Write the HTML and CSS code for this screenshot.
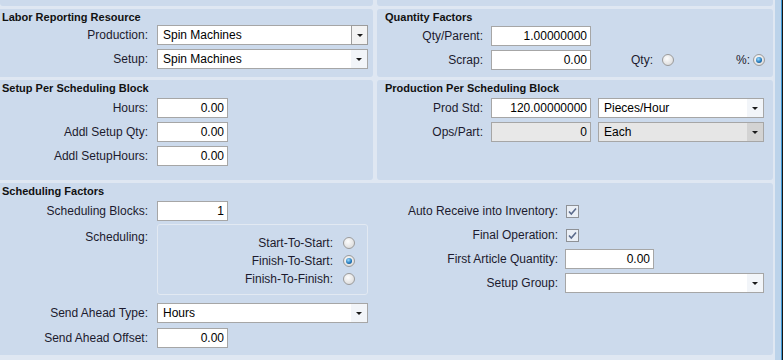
FILE: index.html
```html
<!DOCTYPE html>
<html>
<head>
    <meta charset="UTF-8">
    <meta name="viewport" content="width=device-width, initial-scale=1.0">
    <link rel="stylesheet" href="styles.css">
</head>
<body>
    <div class="screen">
        <div class="board">
            <div class="panel stub"></div>
            <div class="panel stub"></div>

            <section class="panel left">
                <h2>Labor Reporting Resource</h2>
                <div class="fields">
                    <div class="row">
                        <label>Production:</label>
                        <div class="select w211 hot"><span>Spin Machines</span><b class="btn"><i class="arrow"></i></b></div>
                    </div>
                    <div class="row">
                        <label>Setup:</label>
                        <div class="select w211"><span>Spin Machines</span><b class="btn"><i class="arrow"></i></b></div>
                    </div>
                </div>
            </section>

            <section class="panel right">
                <h2>Quantity Factors</h2>
                <div class="fields q">
                    <div class="row">
                        <label>Qty/Parent:</label>
                        <div class="line"><input class="num w100" value="1.00000000" readonly></div>
                    </div>
                    <div class="row">
                        <label>Scrap:</label>
                        <div class="line">
                            <input class="num w100" value="0.00" readonly>
                            <span class="opt qty">Qty:</span><span class="radio"></span>
                            <span class="opt pct">%:</span><span class="radio on"></span>
                        </div>
                    </div>
                </div>
            </section>

            <section class="panel left">
                <h2>Setup Per Scheduling Block</h2>
                <div class="fields s">
                    <div class="row">
                        <label>Hours:</label>
                        <div class="line"><input class="num w71" value="0.00" readonly></div>
                    </div>
                    <div class="row">
                        <label>Addl Setup Qty:</label>
                        <div class="line"><input class="num w71" value="0.00" readonly></div>
                    </div>
                    <div class="row">
                        <label>Addl SetupHours:</label>
                        <div class="line"><input class="num w71" value="0.00" readonly></div>
                    </div>
                </div>
            </section>

            <section class="panel right">
                <h2>Production Per Scheduling Block</h2>
                <div class="fields s">
                    <div class="row">
                        <label>Prod Std:</label>
                        <div class="line">
                            <input class="num w100" value="120.00000000" readonly>
                            <div class="select w166 after"><span>Pieces/Hour</span><b class="btn"><i class="arrow"></i></b></div>
                        </div>
                    </div>
                    <div class="row">
                        <label>Ops/Part:</label>
                        <div class="line">
                            <input class="num w100 off" value="0" readonly>
                            <div class="select w166 after off"><span>Each</span><b class="btn"><i class="arrow"></i></b></div>
                        </div>
                    </div>
                </div>
            </section>

            <section class="panel full">
                <h2>Scheduling Factors</h2>
                <div class="split">
                    <div class="col">
                        <div class="row">
                            <label>Scheduling Blocks:</label>
                            <div class="line"><input class="num w71" value="1" readonly></div>
                        </div>
                        <div class="row tall">
                            <label>Scheduling:</label>
                            <div class="group">
                                <div class="choice">Start-To-Start:<span class="radio"></span></div>
                                <div class="choice">Finish-To-Start:<span class="radio on"></span></div>
                                <div class="choice">Finish-To-Finish:<span class="radio"></span></div>
                            </div>
                        </div>
                        <div class="row gap8">
                            <label>Send Ahead Type:</label>
                            <div class="select w211"><span>Hours</span><b class="btn"><i class="arrow"></i></b></div>
                        </div>
                        <div class="row gap5">
                            <label>Send Ahead Offset:</label>
                            <div class="line"><input class="num w71" value="0.00" readonly></div>
                        </div>
                    </div>
                    <div class="col flags">
                        <div class="row">
                            <label>Auto Receive into Inventory:</label>
                            <div class="line"><span class="check"><svg width="11" height="11" viewBox="0 0 11 11"><path d="M2 5.5 L4.3 8 L9 2.5" fill="none" stroke="#5b6b8c" stroke-width="1.6"/></svg></span></div>
                        </div>
                        <div class="row">
                            <label>Final Operation:</label>
                            <div class="line"><span class="check"><svg width="11" height="11" viewBox="0 0 11 11"><path d="M2 5.5 L4.3 8 L9 2.5" fill="none" stroke="#5b6b8c" stroke-width="1.6"/></svg></span></div>
                        </div>
                        <div class="row">
                            <label>First Article Quantity:</label>
                            <div class="line"><input class="num w89" value="0.00" readonly></div>
                        </div>
                        <div class="row">
                            <label>Setup Group:</label>
                            <div class="select w199"><span></span><b class="btn"><i class="arrow"></i></b></div>
                        </div>
                    </div>
                </div>
            </section>
        </div>
        <div class="scroll"></div>
    </div>
</body>
</html>
```

FILE: styles.css
```css
body {
    margin: 0;
    background-color: #dfe7f2;
    font-family: "Liberation Sans", Arial, sans-serif;
    font-size: 12px;
    color: #1c1a2e;
}
.screen {
    display: flex;
    width: 783px;
    height: 360px;
    overflow: hidden;
}
.board {
    width: 773px;
    display: grid;
    grid-template-columns: 373px 396px;
    grid-template-rows: 6px 68px 100px 172px;
    column-gap: 4px;
    row-gap: 3px;
}
.scroll {
    margin-left: 2px;
    width: 8px;
    background: linear-gradient(to right, #bcd3ea 0 6px, #3c97d3 6px 7px, #161616 7px);
}
.panel {
    background-color: #ccdaec;
    border-radius: 3px;
    padding: 2px 0 0 2px;
    box-sizing: border-box;
}
.stub {
    padding: 0;
    border-radius: 0 0 3px 3px;
}
.panel.left {
    border-radius: 0 3px 3px 0;
}
.full {
    grid-column: 1 / 3;
    border-radius: 0 3px 3px 0;
}
h2 {
    margin: 0;
    font-size: 11px;
    font-weight: bold;
    line-height: 12px;
    color: #111;
}
.panel.right h2 {
    padding-left: 6px;
}
.fields {
    display: flex;
    flex-direction: column;
    gap: 4px;
    margin-top: 2px;
}
.fields.q {
    margin-top: 3px;
}
.fields.s {
    margin-top: 4px;
}
.row {
    display: grid;
    grid-template-columns: 146px auto;
    column-gap: 9px;
    align-items: center;
    height: 20px;
}
.right .row {
    grid-template-columns: 104px auto;
    column-gap: 8px;
}
.row label {
    text-align: right;
    white-space: nowrap;
}
.line {
    display: flex;
    align-items: center;
}
input {
    height: 20px;
    box-sizing: border-box;
    border: 1px solid #a6a6a6;
    background: #fff;
    font-family: "Liberation Sans", Arial, sans-serif;
    font-size: 12px;
    color: #000;
    padding: 0 3px;
    margin: 0;
    outline: none;
}
input.num {
    text-align: right;
}
input.off {
    background: #e8e8e8;
}
.w71 { width: 71px; }
.w89 { width: 89px; }
.w100 { width: 100px; }
.w166 { width: 166px; }
.w199 { width: 199px; }
.w211 { width: 211px; }

.select {
    display: flex;
    align-items: center;
    height: 20px;
    box-sizing: border-box;
    border: 1px solid #a6a6a6;
    background: #fff;
    padding-left: 5px;
    color: #000;
}
.select.after {
    margin-left: 7px;
}
.select .btn {
    margin-left: auto;
    width: 16px;
    height: 18px;
    display: flex;
    align-items: center;
    justify-content: center;
    background: #f2f5f9;
}
.select.hot .btn {
    height: 20px;
    margin: -1px -1px -1px auto;
    border: 1px solid #9c9c9c;
    box-sizing: border-box;
    width: 17px;
    background: #f3f3f3;
}
.select.off {
    background: #e6e6e6;
}
.select.off .btn {
    background: #d3d3d3;
}
.arrow {
    width: 0;
    height: 0;
    border-top: 3px solid #1a1a1a;
    border-left: 3px solid transparent;
    border-right: 3px solid transparent;
}

.opt.qty {
    margin-left: 40px;
}
.opt.pct {
    margin-left: 62px;
}
.radio {
    width: 12px;
    height: 12px;
    box-sizing: border-box;
    border-radius: 50%;
    border: 1px solid #9b9b9b;
    background: radial-gradient(circle at 40% 35%, #fdfdfd, #d4d4d4);
    display: inline-flex;
    align-items: center;
    justify-content: center;
    margin-left: 9px;
}
.opt.pct + .radio {
    margin-left: 3px;
}
.radio.on::after {
    content: "";
    width: 6px;
    height: 6px;
    border-radius: 50%;
    background: radial-gradient(circle at 40% 35%, #9ddcff, #1d74b8 60%, #0f3f70);
}
.check {
    width: 13px;
    height: 13px;
    box-sizing: border-box;
    border: 1px solid #8e9196;
    background: #eaeff6;
    display: inline-flex;
    align-items: center;
    justify-content: center;
    margin-left: 1px;
}

.split {
    display: grid;
    grid-template-columns: 371px 396px;
    column-gap: 4px;
    margin-top: 4px;
}
.col {
    display: flex;
    flex-direction: column;
    gap: 4px;
}
.col .row.tall {
    height: 71px;
    align-items: start;
    margin-top: -1px;
}
.row.tall label {
    padding-top: 6px;
}
.row.gap8 {
    margin-top: 4px;
}
.row.gap5 {
    margin-top: 1px;
}
.group {
    width: 211px;
    height: 71px;
    box-sizing: border-box;
    border: 1px solid #e2e9f2;
    border-radius: 3px;
    padding: 9px 12px 0 0;
}
.choice {
    height: 18px;
    display: flex;
    align-items: center;
    justify-content: flex-end;
}
.choice .radio {
    margin-left: 10px;
}
.flags .row {
    grid-template-columns: 181px auto;
    column-gap: 7px;
}
```
